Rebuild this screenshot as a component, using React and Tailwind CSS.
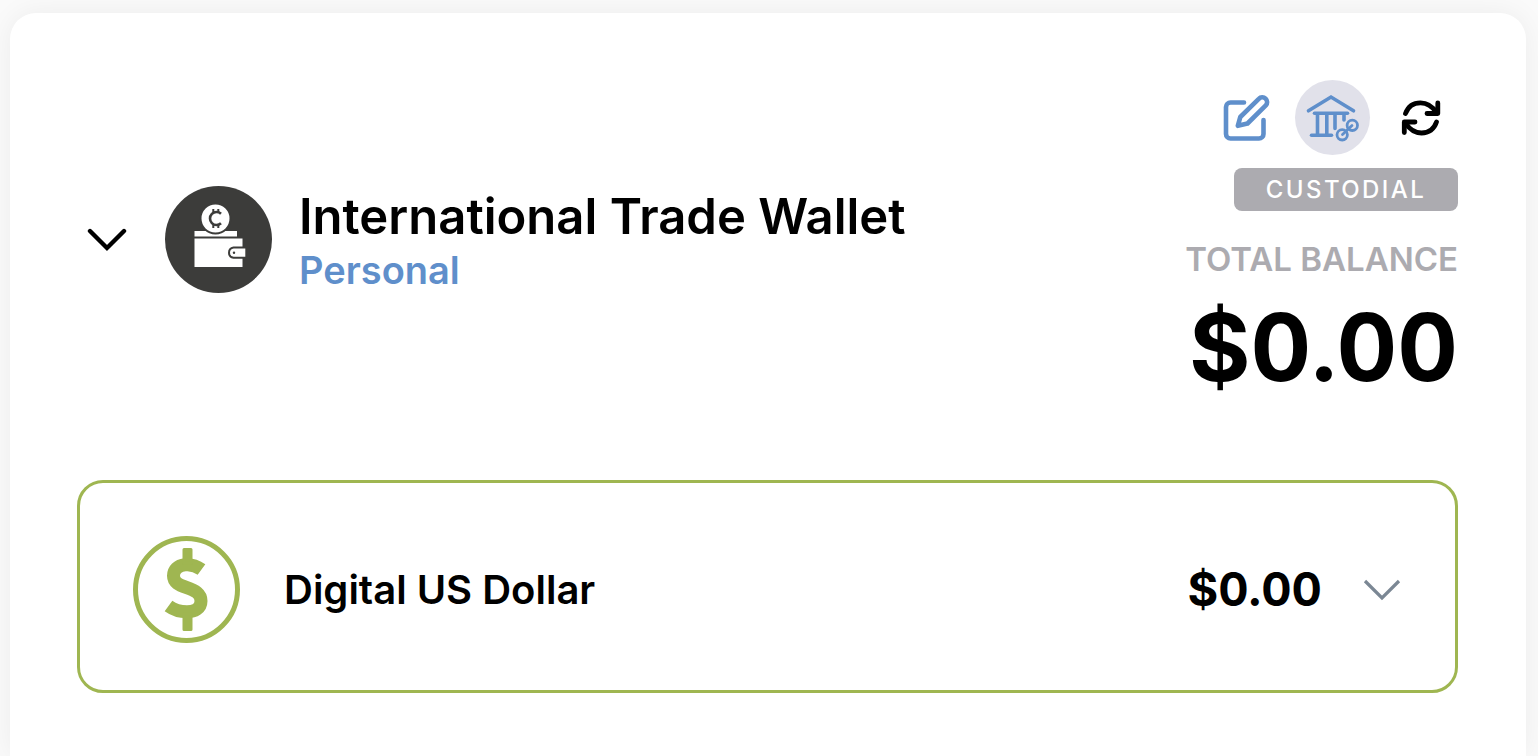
function EditIcon() {
  return (
    <svg viewBox="0 0 48 48" className="size-12" fill="none" stroke="#5f8fcb" strokeWidth="4.6" strokeLinecap="round" strokeLinejoin="round" aria-hidden="true">
      <path d="M22 8.500H8.500A4.500 4.500 0 0 0 4 13V40A4.500 4.500 0 0 0 8.500 44.500H37A4.500 4.500 0 0 0 41.500 40V26" />
      <path d="M15.800 31.800L18.300 23L36.800 4.800A4.800 4.800 0 0 1 43.800 11.400L25.500 29.500Z" strokeWidth="4.600" />
    </svg>
  );
}

function BankLinkIcon() {
  return (
    <svg viewBox="0 0 75 75" className="size-full" fill="none" stroke="#5f8fcb" strokeWidth="3.6" strokeLinecap="round" strokeLinejoin="round" aria-hidden="true">
      <path d="M13.500 30.800L36 17L58.500 30.800" strokeLinejoin="miter" />
      <path d="M19.500 33.300H52.500" />
      <path d="M22.500 34V54.500M31.800 34V54.500M40 34V48.500M49 34V40" />
      <path d="M16.500 55.200H36.500" />
      <g strokeWidth="2.800">
        <circle cx="47.200" cy="54.800" r="5.200" />
        <circle cx="57.300" cy="45.300" r="5.200" />
        <path d="M47.500 54.500L57 45.600" />
      </g>
    </svg>
  );
}

function RefreshIcon() {
  return (
    <svg viewBox="0 0 40 38" className="h-[38px] w-10" fill="none" stroke="#000" strokeWidth="4.8" strokeLinecap="round" strokeLinejoin="round" aria-hidden="true">
      <path d="M4.500 14.500C7 7.500 12.500 3.800 19.500 3.800C26.500 3.800 31.500 7.500 35.500 13.500" />
      <path d="M36.800 4V14.500H26" />
      <path d="M35.500 23C33 30.200 27.500 34 20.500 34C13.500 34 8.500 30.200 4.500 24" />
      <path d="M3.300 33.500V23H14" />
    </svg>
  );
}

function Chevron({ className, strokeWidth, cap }) {
  return (
    <svg viewBox="0 0 40 24" className={className} fill="none" stroke="currentColor" strokeWidth={strokeWidth} strokeLinecap={cap} aria-hidden="true">
      <path d="M3 3L20 20L37 3" />
    </svg>
  );
}

function WalletIcon() {
  return (
    <svg viewBox="0 0 107 107" className="size-[107px] shrink-0" aria-hidden="true">
      <circle cx="53.500" cy="53.500" r="53.500" fill="#3c3c3a" />
      <rect x="29.500" y="45" width="42.500" height="5.500" fill="#fff" />
      <circle cx="50.500" cy="32.500" r="15" fill="#fff" stroke="#3c3c3a" strokeWidth="2" />
      <path d="M56 27.800A6.500 6.500 0 1 0 56 37.200" fill="none" stroke="#3c3c3a" strokeWidth="2.600" />
      <path d="M48.300 23V27M53.300 23V27M48.300 38V42M53.300 38V42" stroke="#3c3c3a" strokeWidth="2" />
      <path d="M29.500 52.500H77.500V81H29.500Z" fill="#fff" />
      <path d="M81.500 61.500H68.500A5.200 5.200 0 0 0 68.500 71.800H81.500Z" fill="#fff" stroke="#3c3c3a" strokeWidth="2" />
      <rect x="80.600" y="60" width="4" height="14" fill="#3c3c3a" />
      <circle cx="69" cy="66.700" r="1.200" fill="#3c3c3a" />
    </svg>
  );
}

function DollarIcon() {
  return (
    <svg viewBox="0 0 107 107" className="size-[107px] shrink-0" fill="none" stroke="#9fb651" aria-hidden="true">
      <circle cx="53.500" cy="53.500" r="51" strokeWidth="5" />
      <path d="M68.500 33.500C63 29.500 57 28.200 52 28.800C44.500 29.600 40.500 34 40.500 39.800C40.500 46.500 46 49 53.500 51.500C62 54.300 68 57.500 68 65C68 72.500 61.500 75.800 54 75.800C47 75.800 41 74 35.500 70" strokeWidth="13" />
      <path d="M51 13.500H58V27H51ZM51 78H58V93.500H51Z" fill="#9fb651" strokeWidth="3" strokeLinejoin="round" />
    </svg>
  );
}

export default function App() {
  return (
    <main className="flex min-h-screen flex-col bg-[#fafafa] pt-[13px] pr-3 pl-[10px] font-['Inter',sans-serif] text-black">
      <section className="flex-1 rounded-t-[26px] bg-white pt-[67px] pr-[68px] pb-[50px] pl-[67px] shadow-[0_0_28px_rgba(0,0,0,0.06)]">
        <header className="flex items-center justify-between">
          <div className="flex items-center">
            <button type="button" aria-label="Collapse wallet" className="mr-[38px] ml-[10px]">
              <Chevron className="h-6 w-10" strokeWidth="4.4" cap="round" />
            </button>
            <WalletIcon />
            <div className="ml-[27px] pt-px">
              <h1 className="text-[49px] leading-[60px] font-semibold">International Trade Wallet</h1>
              <p className="text-[38px] leading-[46px] font-semibold text-[#5f8fcb]">Personal</p>
            </div>
          </div>

          <div className="flex flex-col items-end">
            <div className="flex items-center pr-[17px]">
              <button type="button" aria-label="Edit wallet" className="mr-[25px]">
                <EditIcon />
              </button>
              <button type="button" aria-label="Linked bank" className="mr-[31px] size-[75px] rounded-full bg-[#e1e1ea]">
                <BankLinkIcon />
              </button>
              <button type="button" aria-label="Refresh balance">
                <RefreshIcon />
              </button>
            </div>
            <span className="mt-[13px] flex h-[43px] w-56 items-center justify-center rounded-lg bg-[#acabb0] text-2xl font-medium tracking-widest text-white">
              CUSTODIAL
            </span>
            <p className="mt-7 text-[33px] leading-10 font-semibold text-[#acabb0]">TOTAL BALANCE</p>
            <p className="mt-4 text-[94px] leading-[104px] font-bold tabular-nums">$0.00</p>
          </div>
        </header>

        <button type="button" className="mt-[81px] flex h-[213px] w-full items-center rounded-[26px] border-3 border-[#9fb651] px-[53px] pt-[6px] text-left">
          <DollarIcon />
          <span className="ml-11 text-[40px] font-semibold">Digital US Dollar</span>
          <span className="ml-auto text-[47px] font-bold tabular-nums">$0.00</span>
          <Chevron className="ml-10 h-6 w-10 text-[#7b8794]" strokeWidth="3.2" cap="butt" />
        </button>
      </section>
    </main>
  );
}
